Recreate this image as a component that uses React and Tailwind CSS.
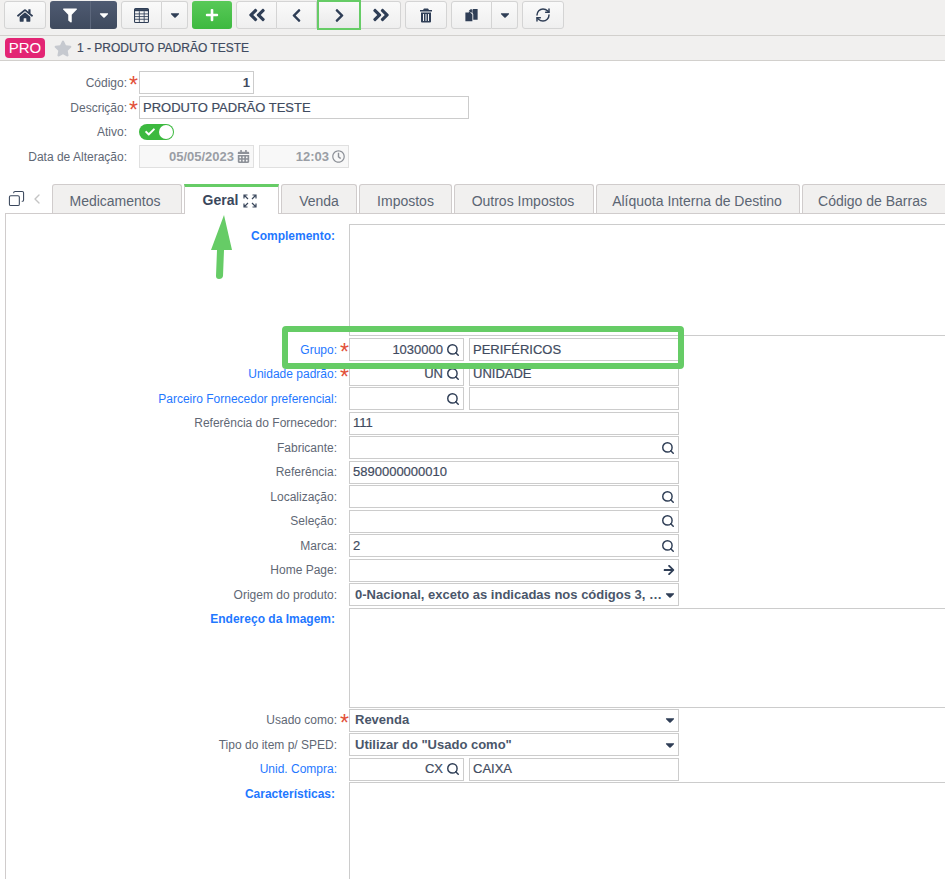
import React from "react";
import {
  FaHome, FaFilter, FaPlus, FaAngleDoubleLeft, FaChevronLeft, FaChevronRight, FaAngleDoubleRight,
  FaCaretDown, FaArrowRight, FaCalendarAlt, FaRegClock, FaStar, FaCheck,
} from "react-icons/fa";
import { Copy, ChevronLeft, Search, RefreshCw } from "lucide-react";

const btn = "h-[28px] flex items-center justify-center border border-[#d4d4d4] bg-gradient-to-b from-[#fafafa] to-[#efefef] text-[#2f3e56]";

function Req() {
  return <span className="w-[10px] text-[#e2503a] text-[23px] leading-[20px] h-[12px] -mt-[3px] ml-[1px] text-center">*</span>;
}

function Lens() {
  return <Search className="w-[14px] h-[14px] text-[#2f3e56] shrink-0" strokeWidth={2.5} />;
}

function Caret() {
  return <FaCaretDown className="w-[14px] h-[14px] text-[#2f3e56] shrink-0" />;
}

function Box({ className = "", children }) {
  return (
    <div className={`h-[23px] border border-[#cccccc] bg-white flex items-center pl-[3px] pr-[3px] text-[13px] text-[#3f4b60] [-webkit-text-stroke:0.2px] whitespace-nowrap overflow-hidden ${className}`}>
      {children}
    </div>
  );
}

function Row({ label, blue, bold, req, children }) {
  return (
    <div className="flex items-center h-[23px] mb-[1.5px]">
      <div className={`w-[331px] text-right text-[12px] ${blue ? "text-[#1f78ff]" : "text-[#5f6875]"} ${bold ? "font-bold" : ""}`}>{label}</div>
      <div className="w-[12px] pl-[2px] flex justify-center">{req && <Req />}</div>
      {children}
    </div>
  );
}

function Lookup({ code, name }) {
  return (
    <div className="flex gap-[5px]">
      <Box className="w-[115px] justify-end gap-[3px]">{code}<Lens /></Box>
      <Box className="w-[210px]">{name}</Box>
    </div>
  );
}

function Wide({ text, icon }) {
  return (
    <Box className="w-[330px] justify-between">
      <span>{text}</span>
      {icon}
    </Box>
  );
}

function Select({ text }) {
  return (
    <Box className="w-[330px] justify-between pl-[5px]! pr-[1px]! font-bold text-[#4a566a]! [-webkit-text-stroke:0px]">
      <span>{text}</span>
      <Caret />
    </Box>
  );
}

function TopRow({ label, req, children }) {
  return (
    <div className="flex items-center">
      <div className="w-[127px] text-right text-[12px] text-[#5f6875]">{label}</div>
      <div className="w-[12px] flex justify-center">{req && <Req />}</div>
      {children}
    </div>
  );
}

const tabs = [
  ["Medicamentos", "w-[130px] pr-[4px]"],
  ["Geral", "w-[95px] pr-[3px]"],
  ["Venda", "w-[76px]"],
  ["Impostos", "w-[93px]"],
  ["Outros Impostos", "w-[140px] pr-[2px]"],
  ["Alíquota Interna de Destino", "w-[204px] pr-[2px]"],
  ["Código de Barras", "w-[150px] pr-[9px]"],
];

export default function App() {
  return (
    <div className="relative w-[945px] h-[879px] overflow-hidden bg-white font-['Liberation_Sans',Arial,sans-serif]">
      {/* toolbar */}
      <div className="h-[36px] bg-[#f1f0ef] border-b border-[#d2d0cd] flex items-start pt-[1px] pl-[4px] gap-[4px]">
        <div className={`${btn} w-[42px] rounded-[3px]`}><FaHome className="w-[16px] h-[15px]" /></div>
        <div className="h-[28px] w-[67px] flex rounded-[3px] bg-gradient-to-b from-[#4f5b72] to-[#3f4a5e] text-white">
          <div className="w-[41px] flex items-center justify-center border-r border-[#5c677c]"><FaFilter className="w-[14px] h-[15px]" /></div>
          <div className="flex-1 flex items-center justify-center"><FaCaretDown className="w-[14px] h-[14px]" /></div>
        </div>
        <div className="flex">
          <div className={`${btn} w-[41px] rounded-l-[3px]`}>
            <svg viewBox="0 0 14 14" className="w-[15px] h-[15px]" fill="none" stroke="currentColor" strokeWidth="1">
              <rect x="0.5" y="0.5" width="13" height="13" rx="1" />
              <path d="M0.5 2h13" strokeWidth="2" />
              <path d="M0.5 5.5h13M0.5 8h13M0.5 10.5h13M5 3v10M9.5 3v10" strokeWidth="0.8" />
            </svg>
          </div>
          <div className={`${btn} w-[26px] border-l-0 rounded-r-[3px]`}><FaCaretDown className="w-[14px] h-[14px]" /></div>
        </div>
        <div className="h-[28px] w-[40px] flex items-center justify-center rounded-[3px] bg-gradient-to-b from-[#58c958] to-[#3db93f] text-white"><FaPlus className="w-[14px] h-[14px]" /></div>
        <div className="flex">
          <div className={`${btn} w-[41px] rounded-l-[3px]`}><FaAngleDoubleLeft className="w-[20px] h-[20px]" /></div>
          <div className={`${btn} w-[40px] border-l-0`}><FaChevronLeft className="w-[15px] h-[15px]" /></div>
          <div className="w-[44px] h-[30px] -mt-[1px] border-2 border-[#66cc66] z-10 flex items-center justify-center bg-gradient-to-b from-[#fafafa] to-[#e9e9e9] text-[#2f3e56]"><FaChevronRight className="w-[15px] h-[15px]" /></div>
          <div className={`${btn} w-[40px] border-l-0 rounded-r-[3px]`}><FaAngleDoubleRight className="w-[20px] h-[20px]" /></div>
        </div>
        <div className={`${btn} w-[42px] rounded-[3px]`}>
          <svg viewBox="0 0 12 14" className="w-[12px] h-[15px]" fill="currentColor">
            <path d="M4 0h4l1 1.5h3V3H0V1.5h3z" />
            <path fillRule="evenodd" d="M1 4h10v9a1 1 0 0 1-1 1H2a1 1 0 0 1-1-1zM3 5.5v7h1v-7zM5.5 5.5v7h1v-7zM8 5.5v7h1v-7z" />
          </svg>
        </div>
        <div className="flex">
          <div className={`${btn} w-[41px] rounded-l-[3px]`}>
            <svg viewBox="0 0 16 16" className="w-[15px] h-[14px]" fill="currentColor">
              <path d="M1 5h4V3.5L7.5 6 9 7.5V15H1z" />
              <path d="M5 3l2-1.5h1.5V5H7z" />
              <path d="M10 1h5v12.5h-5V7L9 5.5V2z" />
            </svg>
          </div>
          <div className={`${btn} w-[26px] border-l-0 rounded-r-[3px]`}><FaCaretDown className="w-[14px] h-[14px]" /></div>
        </div>
        <div className={`${btn} w-[42px] rounded-[3px]`}><RefreshCw className="w-[16px] h-[16px]" strokeWidth={2.2} /></div>
      </div>

      {/* title */}
      <div className="h-[25px] bg-[#f1f0ef] border-b border-[#d2d0cd] flex items-center pl-[5px]">
        <span className="h-[20px] w-[40px] rounded-[4px] bg-[#e32574] text-white text-[15px] flex items-center justify-center">PRO</span>
        <FaStar className="w-[18px] h-[17px] ml-[9px] text-[#c6c9cf]" />
        <span className="ml-[5px] text-[12px] text-[#3f4b60] [-webkit-text-stroke:0.2px]">1 - PRODUTO PADRÃO TESTE</span>
      </div>

      {/* header form */}
      <div className="pt-[10px] flex flex-col gap-[2px]">
        <TopRow label="Código:" req><Box className="w-[115px] justify-end font-bold [-webkit-text-stroke:0px]">1</Box></TopRow>
        <TopRow label="Descrição:" req><Box className="w-[330px]">PRODUTO PADRÃO TESTE</Box></TopRow>
        <div className="my-[3px] h-[16px] flex items-center">
          <TopRow label="Ativo:">
            <div className="w-[35px] h-[16px] rounded-full bg-[#3cb93f] flex items-center justify-between pl-[6px] pr-[1px]">
              <FaCheck className="w-[10px] h-[10px] text-white" />
              <span className="w-[14px] h-[14px] rounded-full bg-white" />
            </div>
          </TopRow>
        </div>
        <TopRow label="Data de Alteração:">
          <div className="flex gap-[5px]">
            <Box className="w-[115px] justify-end gap-[3px] bg-[#f8f8f8]! border-[#e0e0e0]! text-[#9a9ea5]! font-bold [-webkit-text-stroke:0px]">05/05/2023<FaCalendarAlt className="w-[13px] h-[13px] text-[#8d9198]" /></Box>
            <Box className="w-[90px] justify-end gap-[3px] bg-[#f8f8f8]! border-[#e0e0e0]! text-[#9a9ea5]! font-bold [-webkit-text-stroke:0px]">12:03<FaRegClock className="w-[13px] h-[13px] text-[#8d9198]" /></Box>
          </div>
        </TopRow>
      </div>

      {/* tabs */}
      <div className="mt-[16px] h-[29px] flex items-end">
        <div className="w-[52px] shrink-0 h-[29px] flex items-center pl-[8px] gap-[4px] text-[#3a475c]">
          <Copy className="w-[17px] h-[17px] -scale-x-100" strokeWidth={1.5} />
          <ChevronLeft className="w-[16px] h-[16px] text-[#c4c4c4]" strokeWidth={2} />
        </div>
        <div className="flex gap-[2px] relative z-10">
          {tabs.map(([t, w]) => t === "Geral" ? (
            <div key={t} className={`${w} h-[30px] -mb-[1px] bg-white border-t-[3px] border-t-[#66cc66] border-x border-x-[#d0cccc] flex items-center justify-center gap-[5px] text-[14px] font-bold text-[#3a475c] shrink-0`}>
              {t}
              <svg viewBox="0 0 14 14" className="w-[14px] h-[14px]" fill="none" stroke="#3a475c" strokeWidth="1.2"><path d="M1 4.5V1h3.5M9.5 1H13v3.5M13 9.5V13H9.5M4.5 13H1V9.5M1.5 1.5L5 5M12.5 1.5L9 5M12.5 12.5L9 9M1.5 12.5L5 9" /></svg>
            </div>
          ) : (
            <div key={t} className={`${w} h-[29px] pt-[4px] bg-[#f1f0ef] border border-b-0 border-[#d0cccc] rounded-t-[3px] flex items-center justify-center text-[14px] text-[#5b6573] shrink-0`}>{t}</div>
          ))}
        </div>
      </div>

      {/* tab body */}
      <div className="ml-[5px] border-l border-t border-[#d0cccc] pt-[10px] h-[700px]">
        <div className="flex items-start h-[111px] mb-[3px]">
          <div className="w-[329px] text-right text-[12px] font-bold text-[#1f78ff] pt-[3px]">Complemento:</div>
          <div className="ml-[14px] flex-1 h-[112px] border-l border-t border-b border-[#cccccc]" />
        </div>
        <Row label="Grupo:" blue req><Lookup code="1030000" name="PERIFÉRICOS" /></Row>
        <Row label="Unidade padrão:" blue req><Lookup code="UN" name="UNIDADE" /></Row>
        <Row label="Parceiro Fornecedor preferencial:" blue><Lookup code="" name="" /></Row>
        <Row label="Referência do Fornecedor:"><Wide text="111" /></Row>
        <Row label="Fabricante:"><Wide text="" icon={<Lens />} /></Row>
        <Row label="Referência:"><Wide text="5890000000010" /></Row>
        <Row label="Localização:"><Wide text="" icon={<Lens />} /></Row>
        <Row label="Seleção:"><Wide text="" icon={<Lens />} /></Row>
        <Row label="Marca:"><Wide text="2" icon={<Lens />} /></Row>
        <Row label="Home Page:"><Wide text="" icon={<FaArrowRight className="w-[12px] h-[12px] text-[#2f3e56]" />} /></Row>
        <Row label="Origem do produto:"><Select text="0-Nacional, exceto as indicadas nos códigos 3, …" /></Row>
        <div className="flex items-start h-[100px] mb-[1px]">
          <div className="w-[329px] text-right text-[12px] font-bold text-[#1f78ff] pt-[2px]">Endereço da Imagem:</div>
          <div className="ml-[14px] flex-1 h-[100px] border-l border-t border-b border-[#cccccc]" />
        </div>
        <Row label="Usado como:" req><Select text="Revenda" /></Row>
        <Row label="Tipo do item p/ SPED:"><Select text={'Utilizar do "Usado como"'} /></Row>
        <Row label="Unid. Compra:" blue><Lookup code="CX" name="CAIXA" /></Row>
        <div className="flex items-start">
          <div className="w-[329px] text-right text-[12px] font-bold text-[#1f78ff] pt-[3px]">Características:</div>
          <div className="ml-[14px] flex-1 h-[120px] border-l border-t border-[#cccccc]" />
        </div>
      </div>

      {/* annotations */}
      <div className="absolute left-[282px] top-[326px] w-[402px] h-[43px] border-[6px] border-[#66cc66] rounded-[4px]" />
      <svg className="absolute left-[205px] top-[212px] w-[30px] h-[72px]" viewBox="0 0 30 72">
        <path d="M19 3L27 38H19L18 64Q17.5 67 14 67Q11 67 11 64L12 38H6Z" fill="#66cc66" />
      </svg>
    </div>
  );
}
